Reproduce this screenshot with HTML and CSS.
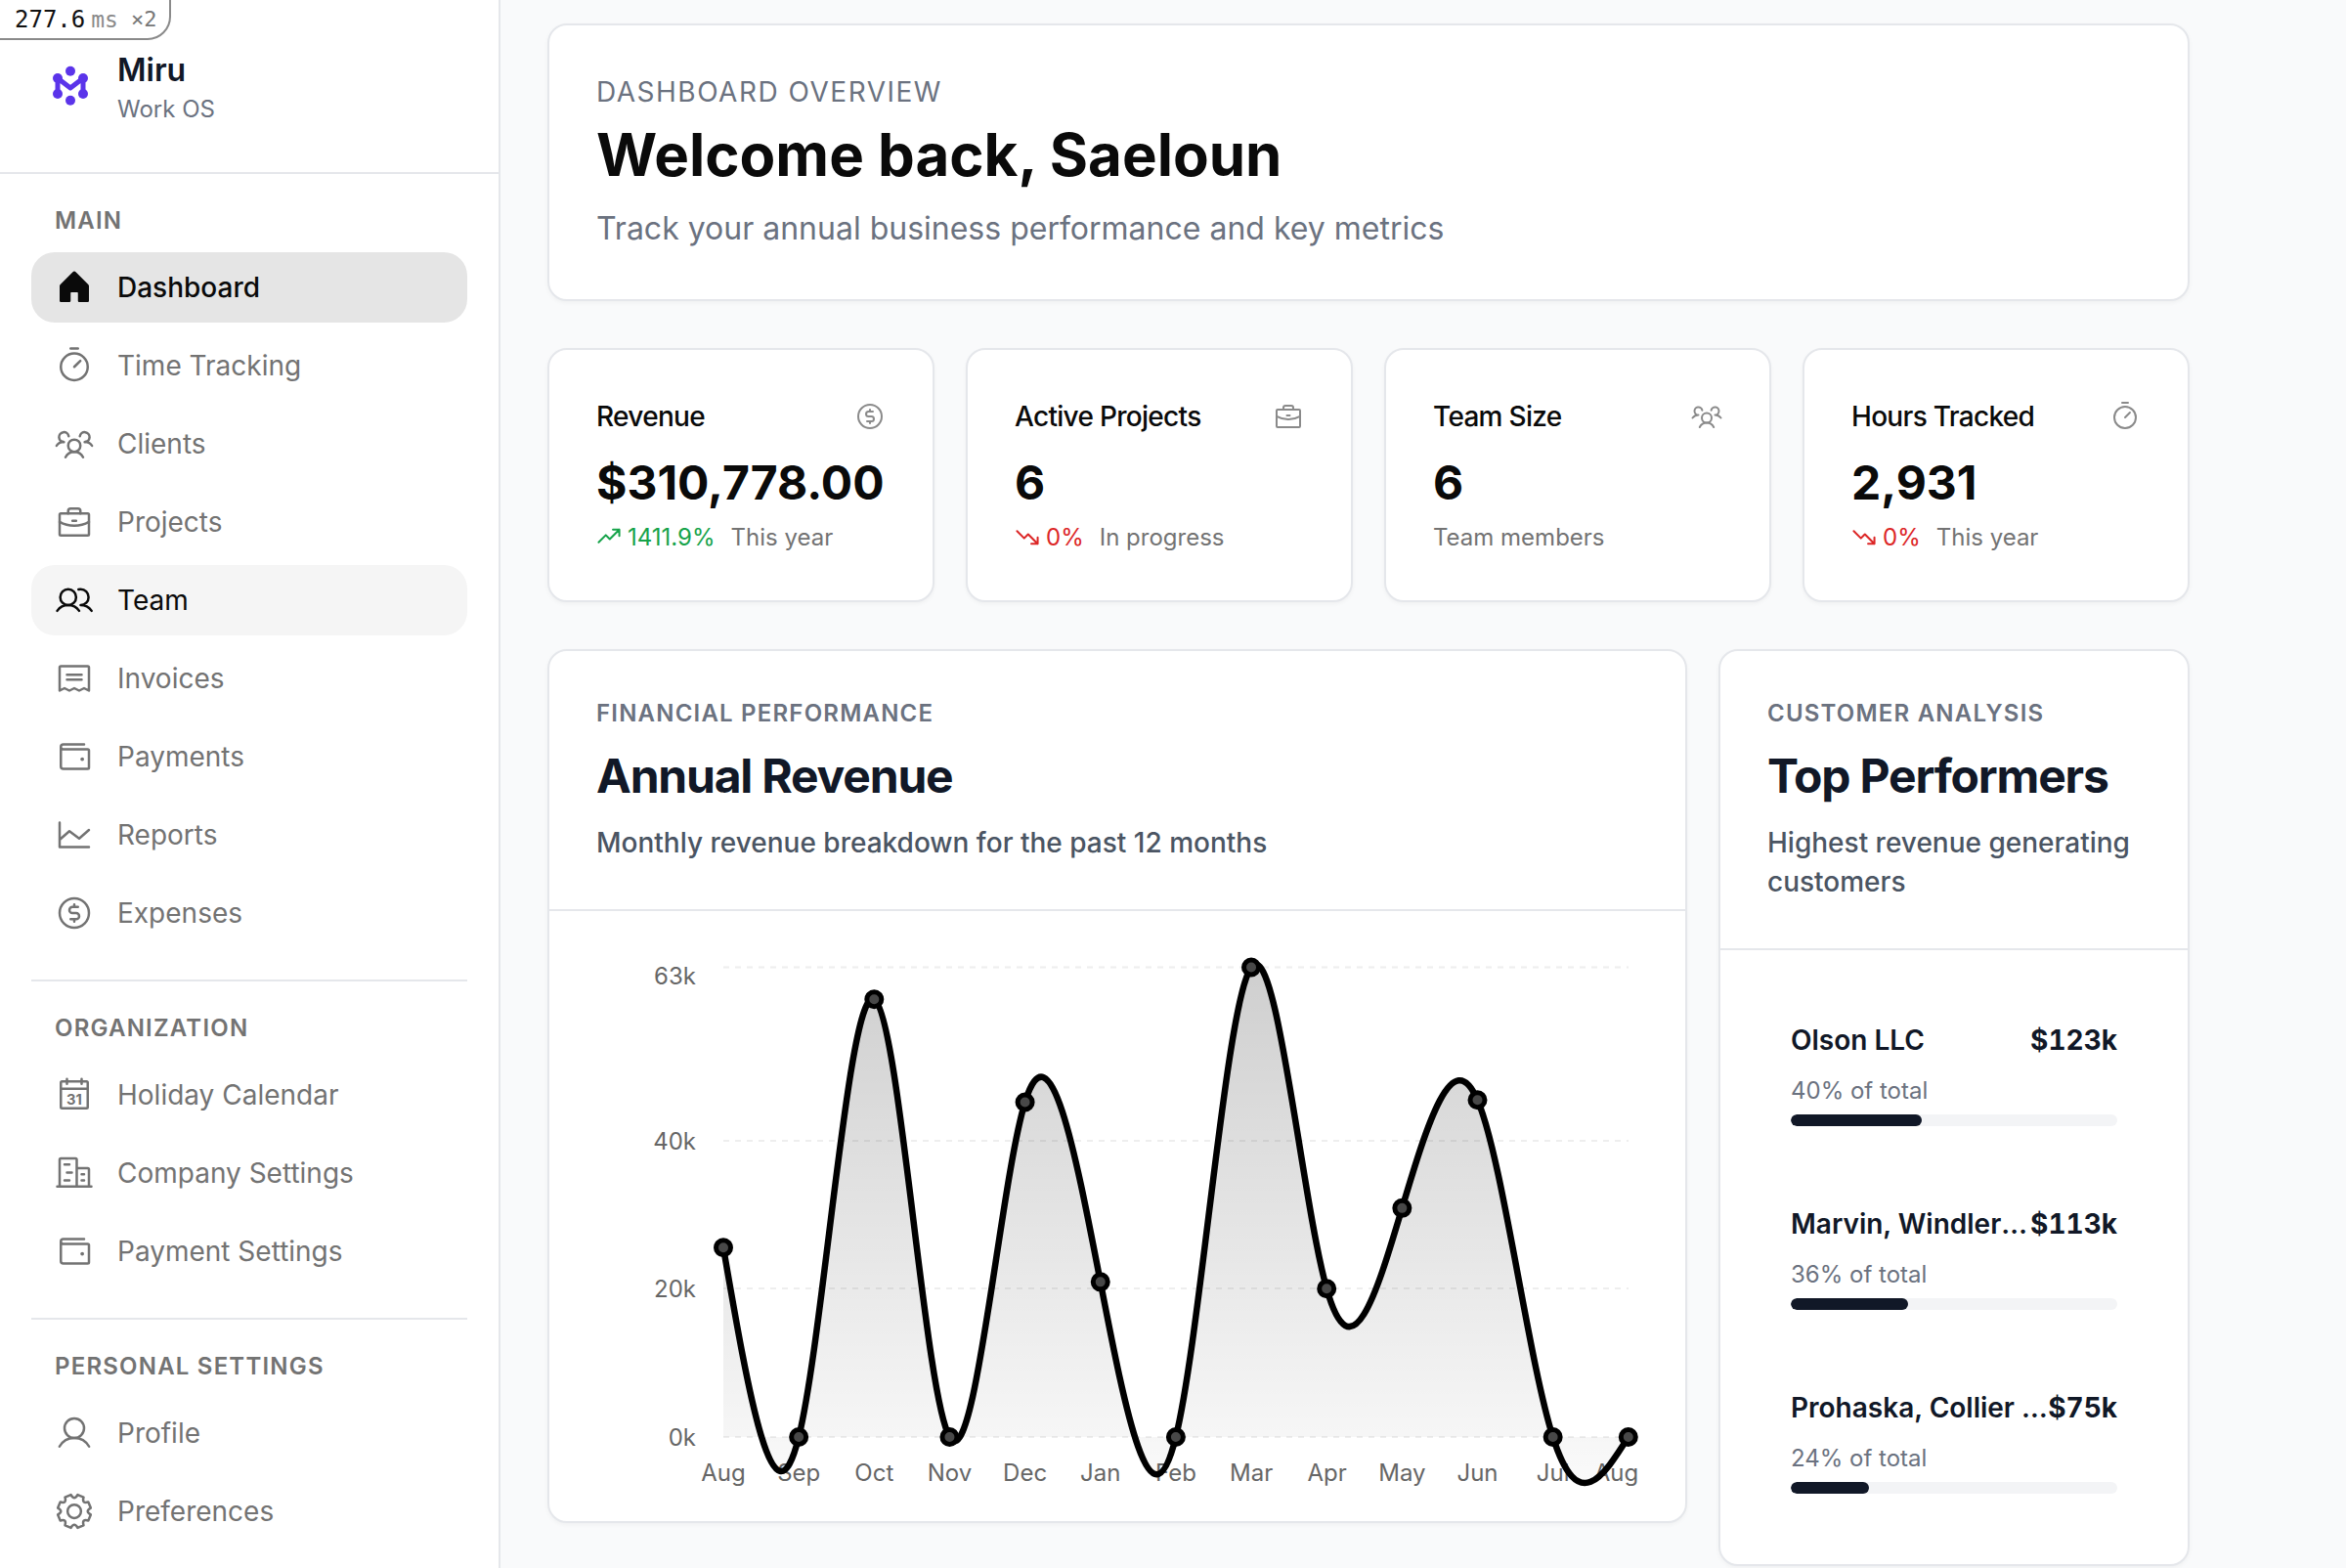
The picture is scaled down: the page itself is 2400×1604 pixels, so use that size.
FILE: index.html
```html
<!DOCTYPE html>
<html lang="en">
<head>
<meta charset="utf-8">
<title>Miru Dashboard</title>
<link rel="stylesheet" href="styles.css">
</head>
<body>
<svg class="sprite" aria-hidden="true">
  <symbol id="i-timer" viewBox="0 0 256 256"><circle cx="128" cy="136" r="88"/><path d="M128 136l39.6-39.6M104 16h48"/></symbol>
  <symbol id="i-users3" viewBox="0 0 256 256"><circle cx="128" cy="140" r="40"/><path d="M196 116a59.8 59.8 0 0 1 48 24M12 140a59.8 59.8 0 0 1 48-24M70.4 216a64.1 64.1 0 0 1 115.2 0M60 116a32 32 0 1 1 31.4-38M164.6 78A32 32 0 1 1 196 116"/></symbol>
  <symbol id="i-case" viewBox="0 0 256 256"><rect x="32" y="72" width="192" height="144" rx="8"/><path d="M168 72V56a16 16 0 0 0-16-16h-48a16 16 0 0 0-16 16v16M224 127.1A191.3 191.3 0 0 1 128 152a191.3 191.3 0 0 1-96-24.9M116 120h24"/></symbol>
  <symbol id="i-users" viewBox="0 0 256 256"><circle cx="88" cy="108" r="52"/><path d="M155.4 57.9a54.5 54.5 0 0 1 14.1-1.9 52 52 0 0 1 0 104M16 197.4a88 88 0 0 1 144 0M169.5 160a87.9 87.9 0 0 1 72 37.4"/></symbol>
  <symbol id="i-receipt" viewBox="0 0 256 256"><path d="M80 104h96M80 136h96M32 208V56a8 8 0 0 1 8-8h176a8 8 0 0 1 8 8v152l-32-16-32 16-32-16-32 16-32-16z"/></symbol>
  <symbol id="i-wallet" viewBox="0 0 256 256"><path d="M40 64v128a16 16 0 0 0 16 16h160a8 8 0 0 0 8-8V88a8 8 0 0 0-8-8H56a16 16 0 0 1-16-16 16 16 0 0 1 16-16h136"/><circle class="dot" cx="180" cy="144" r="12"/></symbol>
  <symbol id="i-chart" viewBox="0 0 256 256"><path d="M224 208H32V48M224 96l-64 56-64-48-64 56"/></symbol>
  <symbol id="i-dollar" viewBox="0 0 256 256"><circle cx="128" cy="128" r="96"/><path d="M128 72v16M128 168v16M104 168h36a20 20 0 0 0 0-40h-24a20 20 0 0 1 0-40h36"/></symbol>
  <symbol id="i-calendar" viewBox="0 0 256 256"><rect x="40" y="40" width="176" height="176" rx="8"/><path d="M176 24v32M80 24v32M40 88h176"/><text class="cal-num" x="128" y="190">31</text></symbol>
  <symbol id="i-buildings" viewBox="0 0 256 256"><path d="M16 216h224M144 216V40a8 8 0 0 0-8-8H40a8 8 0 0 0-8 8v176M224 216V104a8 8 0 0 0-8-8h-72M64 72h32M80 124h32M64 176h32M176 176h16M176 136h16"/></symbol>
  <symbol id="i-user" viewBox="0 0 256 256"><circle cx="128" cy="96" r="64"/><path d="M31 216a112 112 0 0 1 194 0"/></symbol>
  <symbol id="i-gear" viewBox="0 0 256 256"><circle cx="128" cy="128" r="44"/><path d="M235.8 106.1L219.7 67.3Q176 80 188.7 36.3L149.9 20.2Q128 60 106.1 20.2L67.3 36.3Q80 80 36.3 67.3L20.2 106.1Q60 128 20.2 149.9L36.3 188.7Q80 176 67.3 219.7L106.1 235.8Q128 196 149.9 235.8L188.7 219.7Q176 176 219.7 188.7L235.8 149.9Q196 128 235.8 106.1Z"/></symbol>
  <symbol id="i-up" viewBox="0 0 256 256"><path d="M232 56l-96 96-40-40-72 72M232 120V56h-64"/></symbol>
  <symbol id="i-down" viewBox="0 0 256 256"><path d="M232 200l-96-96-40 40-72-72M232 136v64h-64"/></symbol>
</svg>

<div class="render-badge"><span class="ms-val">277.6</span><span class="ms-unit">ms</span><span class="ms-count">×2</span></div>

<div class="app">
  <aside class="sidebar">
    <header class="brand">
      <svg class="brand-logo" viewBox="0 0 36 42" width="36" height="42" aria-hidden="true">
        <circle cx="18" cy="6.7" r="5"/><circle cx="18" cy="36.7" r="5"/>
        <circle cx="5" cy="14" r="5"/><circle cx="5" cy="30" r="5"/>
        <circle cx="31" cy="14" r="5"/><circle cx="31" cy="30" r="5"/>
        <path class="brand-m" d="M5 14v16M31 14v16M5 14l13 10 13-10"/>
      </svg>
      <div class="brand-text">
        <div class="brand-name">Miru</div>
        <div class="brand-sub">Work OS</div>
      </div>
    </header>
    <nav class="nav">
      <section class="nav-group">
        <h4 class="nav-label">MAIN</h4>
        <a class="nav-item is-active"><svg class="nav-icon house" viewBox="0 0 256 256"><path d="M224 120v96a8 8 0 0 1-8 8h-56a8 8 0 0 1-8-8v-52a4 4 0 0 0-4-4h-40a4 4 0 0 0-4 4v52a8 8 0 0 1-8 8H40a8 8 0 0 1-8-8v-96a16 16 0 0 1 4.69-11.31l80-80a16 16 0 0 1 22.62 0l80 80A16 16 0 0 1 224 120z"/></svg>Dashboard</a>
        <a class="nav-item"><svg class="nav-icon line"><use href="#i-timer"/></svg>Time Tracking</a>
        <a class="nav-item"><svg class="nav-icon line"><use href="#i-users3"/></svg>Clients</a>
        <a class="nav-item"><svg class="nav-icon line"><use href="#i-case"/></svg>Projects</a>
        <a class="nav-item is-hover"><svg class="nav-icon line"><use href="#i-users"/></svg>Team</a>
        <a class="nav-item"><svg class="nav-icon line"><use href="#i-receipt"/></svg>Invoices</a>
        <a class="nav-item"><svg class="nav-icon line"><use href="#i-wallet"/></svg>Payments</a>
        <a class="nav-item"><svg class="nav-icon line"><use href="#i-chart"/></svg>Reports</a>
        <a class="nav-item"><svg class="nav-icon line"><use href="#i-dollar"/></svg>Expenses</a>
      </section>
      <section class="nav-group">
        <h4 class="nav-label">ORGANIZATION</h4>
        <a class="nav-item"><svg class="nav-icon line"><use href="#i-calendar"/></svg>Holiday Calendar</a>
        <a class="nav-item"><svg class="nav-icon line"><use href="#i-buildings"/></svg>Company Settings</a>
        <a class="nav-item"><svg class="nav-icon line"><use href="#i-wallet"/></svg>Payment Settings</a>
      </section>
      <section class="nav-group">
        <h4 class="nav-label">PERSONAL SETTINGS</h4>
        <a class="nav-item"><svg class="nav-icon line"><use href="#i-user"/></svg>Profile</a>
        <a class="nav-item"><svg class="nav-icon line"><use href="#i-gear"/></svg>Preferences</a>
      </section>
    </nav>
  </aside>

  <main class="main">
    <section class="card welcome">
      <p class="welcome-eyebrow">DASHBOARD OVERVIEW</p>
      <h1 class="welcome-title">Welcome back, Saeloun</h1>
      <p class="welcome-sub">Track your annual business performance and key metrics</p>
    </section>

    <section class="stats">
      <article class="card stat">
        <div class="stat-head"><span>Revenue</span><svg class="stat-icon line"><use href="#i-dollar"/></svg></div>
        <div class="stat-value">$310,778.00</div>
        <div class="stat-foot"><svg class="trend line up"><use href="#i-up"/></svg><span class="up">1411.9%</span><span class="stat-note">This year</span></div>
      </article>
      <article class="card stat">
        <div class="stat-head"><span>Active Projects</span><svg class="stat-icon line"><use href="#i-case"/></svg></div>
        <div class="stat-value">6</div>
        <div class="stat-foot"><svg class="trend line down"><use href="#i-down"/></svg><span class="down">0%</span><span class="stat-note">In progress</span></div>
      </article>
      <article class="card stat">
        <div class="stat-head"><span>Team Size</span><svg class="stat-icon line"><use href="#i-users3"/></svg></div>
        <div class="stat-value">6</div>
        <div class="stat-foot"><span class="stat-note plain">Team members</span></div>
      </article>
      <article class="card stat">
        <div class="stat-head"><span>Hours Tracked</span><svg class="stat-icon line"><use href="#i-timer"/></svg></div>
        <div class="stat-value">2,931</div>
        <div class="stat-foot"><svg class="trend line down"><use href="#i-down"/></svg><span class="down">0%</span><span class="stat-note">This year</span></div>
      </article>
    </section>

    <section class="panels">
      <article class="card panel">
        <header class="panel-head">
          <p class="panel-eyebrow">FINANCIAL PERFORMANCE</p>
          <h2 class="panel-title">Annual Revenue</h2>
          <p class="panel-sub">Monthly revenue breakdown for the past 12 months</p>
        </header>
        <svg id="revenue-chart" class="chart" viewBox="562 932 1162 624" width="1162" height="624">
          <defs>
            <linearGradient id="area-fill" x1="0" y1="0" x2="0" y2="1">
              <stop offset="0" stop-color="#000" stop-opacity="0.19"/>
              <stop offset="1" stop-color="#000" stop-opacity="0.02"/>
            </linearGradient>
          </defs>
          <g class="chart-grid">
            <path d="M740 989.5H1666"/><path d="M740 1167H1666"/><path d="M740 1318H1666"/><path d="M740 1470H1666"/>
          </g>
          <g class="chart-y">
            <text x="712" y="1007">63k</text><text x="712" y="1176">40k</text><text x="712" y="1327">20k</text><text x="712" y="1479">0k</text>
          </g>
          <g class="chart-x">
            <text x="740" y="1515">Aug</text><text x="817.2" y="1515">Sep</text><text x="894.3" y="1515">Oct</text><text x="971.5" y="1515">Nov</text><text x="1048.6" y="1515">Dec</text><text x="1125.8" y="1515">Jan</text><text x="1202.9" y="1515">Feb</text><text x="1280.1" y="1515">Mar</text><text x="1357.7" y="1515">Apr</text><text x="1434.4" y="1515">May</text><text x="1511.5" y="1515">Jun</text><text x="1588.7" y="1515">Jul</text><text x="1653.5" y="1515">Aug</text>
          </g>
          <path id="chart-area" class="chart-area"/>
          <path id="chart-line" class="chart-line"/>
          <g id="chart-dots" class="chart-dots"></g>
        </svg>
      </article>

      <article class="card panel">
        <header class="panel-head">
          <p class="panel-eyebrow">CUSTOMER ANALYSIS</p>
          <h2 class="panel-title">Top Performers</h2>
          <p class="panel-sub">Highest revenue generating customers</p>
        </header>
        <div class="performers">
          <div class="performer">
            <div class="performer-row"><span class="performer-name">Olson LLC</span><span class="performer-value">$123k</span></div>
            <div class="performer-share">40% of total</div>
            <div class="bar"><div class="bar-fill" style="width:40%"></div></div>
          </div>
          <div class="performer">
            <div class="performer-row"><span class="performer-name">Marvin, Windler and Bartoletti</span><span class="performer-value">$113k</span></div>
            <div class="performer-share">36% of total</div>
            <div class="bar"><div class="bar-fill" style="width:36%"></div></div>
          </div>
          <div class="performer">
            <div class="performer-row"><span class="performer-name">Prohaska, Collier and Kunde</span><span class="performer-value">$75k</span></div>
            <div class="performer-share">24% of total</div>
            <div class="bar"><div class="bar-fill" style="width:24%"></div></div>
          </div>
        </div>
      </article>
    </section>
  </main>
</div>
<script src="chart.js"></script>
</body>
</html>
```

FILE: styles.css
```css
* { box-sizing: border-box; }
html, body { margin: 0; height: 1604px; overflow: hidden; }
body { font-family: "Inter", "Liberation Sans", sans-serif; background: #f9fafb; color: #111; position: relative; }
p, h1, h2, h4 { margin: 0; }
.sprite { position: absolute; width: 0; height: 0; overflow: hidden; }

.line { fill: none; stroke: currentColor; stroke-width: 16; stroke-linecap: round; stroke-linejoin: round; }
.line .dot, symbol .dot { fill: currentColor; stroke: none; }
.cal-num { font: 700 94px "Inter", sans-serif; text-anchor: middle; fill: currentColor; stroke: none; }

.render-badge { position: absolute; left: -2px; top: -2px; width: 177px; height: 43px; background: #fff; border: 2px solid #8a8a8a; border-bottom-right-radius: 24px; z-index: 5; display: flex; align-items: center; padding-left: 15px; font-family: "DejaVu Sans Mono", monospace; }
.ms-val { font-size: 24px; color: #111; }
.ms-unit { font-size: 23px; color: #8a8a8a; margin-left: 6px; }
.ms-count { font-size: 22px; color: #777; margin-left: 13px; }

.app { display: flex; height: 1604px; }
.sidebar { width: 512px; flex: none; background: #fff; border-right: 2px solid #e5e7eb; }
.brand { height: 178px; border-bottom: 2px solid #e5e7eb; padding: 52px 0 0 54px; display: flex; gap: 30px; align-items: flex-start; }
.brand-logo { margin-top: 14px; flex: none; fill: #5b34ea; }
.brand-m { fill: none; stroke: #5b34ea; stroke-width: 5; stroke-linecap: round; stroke-linejoin: round; }
.brand-name { font-size: 32px; line-height: 40px; font-weight: 600; color: #111827; }
.brand-sub { font-size: 24px; line-height: 32px; margin-top: 4px; color: #6b7280; }

.nav { padding: 32px 32px 0; }
.nav-group { display: flex; flex-direction: column; gap: 8px; padding-bottom: 32px; margin-bottom: 32px; border-bottom: 2px solid #e5e7eb; }
.nav-group:last-child { border-bottom: 0; margin-bottom: 0; }
.nav-label { font-size: 24px; line-height: 32px; font-weight: 600; letter-spacing: 1.2px; color: #737373; padding-left: 24px; margin-bottom: 8px; }
.nav-item { display: flex; align-items: center; gap: 24px; height: 72px; padding-left: 24px; border-radius: 24px; font-size: 28px; color: #737373; }
.nav-icon { width: 40px; height: 40px; flex: none; }
.nav-item.is-active { background: #e5e5e5; color: #0a0a0a; font-weight: 500; }
.nav-item.is-hover { background: #f5f5f5; color: #0a0a0a; }
.house { fill: #0a0a0a; }

.main { flex: 1; min-width: 0; padding: 24px 160px 0 48px; display: flex; flex-direction: column; gap: 48px; }
.card { background: #fff; border: 2px solid #e5e7eb; border-radius: 20px; box-shadow: 0 2px 4px rgba(0,0,0,.04); }

.welcome { padding: 48px; }
.welcome-eyebrow { font-size: 28px; line-height: 40px; letter-spacing: 1.5px; color: #6b7280; }
.welcome-title { font-size: 60px; line-height: 72px; font-weight: 700; color: #0a0a0a; margin-top: 8px; }
.welcome-sub { font-size: 32px; line-height: 48px; color: #6b7280; margin-top: 16px; }

.stats { display: grid; grid-template-columns: repeat(4, 1fr); gap: 32px; }
.stat { padding: 48px 48px 49px; }
.stat-head { display: flex; justify-content: space-between; align-items: center; height: 40px; font-size: 28px; font-weight: 500; letter-spacing: -0.7px; color: #0a0a0a; margin-bottom: 18px; }
.stat-icon { width: 32px; height: 32px; color: #8a8a8a; }
.stat-value { font-size: 48px; line-height: 60px; font-weight: 700; color: #0a0a0a; margin-bottom: 9px; }
.stat-foot { display: flex; align-items: center; height: 32px; font-size: 24px; }
.trend { width: 26px; height: 26px; margin-right: 6px; stroke-width: 20; }
span.up, .trend.up { color: #16a34a; }
span.down, .trend.down { color: #dc2626; }
.stat-note { color: #737373; margin-left: 16px; }
.stat-note.plain { margin-left: 0; }

.panels { display: grid; grid-template-columns: 1166px 482px; gap: 32px; align-items: start; }
.panel-head { padding: 48px; border-bottom: 2px solid #e5e7eb; }
.panel-eyebrow { font-size: 24px; line-height: 32px; font-weight: 600; letter-spacing: 1.2px; color: #6b7280; }
.panel-title { font-size: 48px; line-height: 64px; font-weight: 700; letter-spacing: -1.2px; color: #111827; margin-top: 16px; }
.panel-sub { font-size: 28px; line-height: 40px; font-weight: 500; color: #4b5563; margin-top: 16px; }

.chart { display: block; }
.chart-grid path { stroke: #eeeeee; stroke-width: 2; stroke-dasharray: 6 6; fill: none; }
.chart-y text, .chart-x text { font-size: 24px; fill: #666; font-family: "Inter", sans-serif; }
.chart-y text { text-anchor: end; }
.chart-x text { text-anchor: middle; }
.chart-area { fill: url(#area-fill); stroke: none; }
.chart-line { fill: none; stroke: #000; stroke-width: 6.5; }
.chart-dots circle { fill: #484848; stroke: #000; stroke-width: 5; }

.performers { padding: 72px; display: flex; flex-direction: column; gap: 80px; }
.performer-row { display: flex; justify-content: space-between; font-size: 28px; line-height: 40px; font-weight: 600; color: #111827; }
.performer-name { min-width: 0; overflow: hidden; white-space: nowrap; text-overflow: ellipsis; }
.performer-value { flex: none; font-weight: 700; font-variant-numeric: tabular-nums; }
.performer-share { font-size: 24px; line-height: 32px; color: #6b7280; margin-top: 16px; }
.bar { height: 12px; border-radius: 6px; background: #f3f4f6; margin-top: 8px; overflow: hidden; }
.bar-fill { height: 100%; background: #111827; border-radius: 6px; }
```

FILE: chart.js
```js
(function () {
  var BASE = 1470;
  var TOP = 989.5;
  var MAX = 63;
  var START = 740;
  var STEP = 77.15;
  var revenue = [25.4, 0, 58.7, 0, 44.9, 20.8, 0, 63, 19.9, 30.7, 45.2, 0, 0];

  var xs = revenue.map(function (_, i) { return START + i * STEP; });
  var ys = revenue.map(function (v) { return BASE - (v / MAX) * (BASE - TOP); });

  function controlPoints(x) {
    var n = x.length - 1, a = [], b = [], r = [], i, m;
    a[0] = 0; b[0] = 2; r[0] = x[0] + 2 * x[1];
    for (i = 1; i < n - 1; i++) { a[i] = 1; b[i] = 4; r[i] = 4 * x[i] + 2 * x[i + 1]; }
    a[n - 1] = 2; b[n - 1] = 7; r[n - 1] = 8 * x[n - 1] + x[n];
    for (i = 1; i < n; i++) { m = a[i] / b[i - 1]; b[i] -= m; r[i] -= m * r[i - 1]; }
    a[n - 1] = r[n - 1] / b[n - 1];
    for (i = n - 2; i >= 0; i--) { a[i] = (r[i] - a[i + 1]) / b[i]; }
    b[n - 1] = (x[n] + a[n - 1]) / 2;
    for (i = 0; i < n - 1; i++) { b[i] = 2 * x[i + 1] - a[i + 1]; }
    return [a, b];
  }

  var px = controlPoints(xs), py = controlPoints(ys);
  var d = "M" + xs[0] + " " + ys[0];
  for (var i = 0; i < xs.length - 1; i++) {
    d += "C" + px[0][i] + " " + py[0][i] + " " + px[1][i] + " " + py[1][i] + " " + xs[i + 1] + " " + ys[i + 1];
  }
  document.getElementById("chart-line").setAttribute("d", d);
  document.getElementById("chart-area").setAttribute("d", d + "L" + xs[xs.length - 1] + " " + BASE + "L" + xs[0] + " " + BASE + "Z");

  var dots = document.getElementById("chart-dots");
  xs.forEach(function (x, k) {
    var c = document.createElementNS("http://www.w3.org/2000/svg", "circle");
    c.setAttribute("cx", x);
    c.setAttribute("cy", ys[k]);
    c.setAttribute("r", 7.5);
    dots.appendChild(c);
  });
})();
```
